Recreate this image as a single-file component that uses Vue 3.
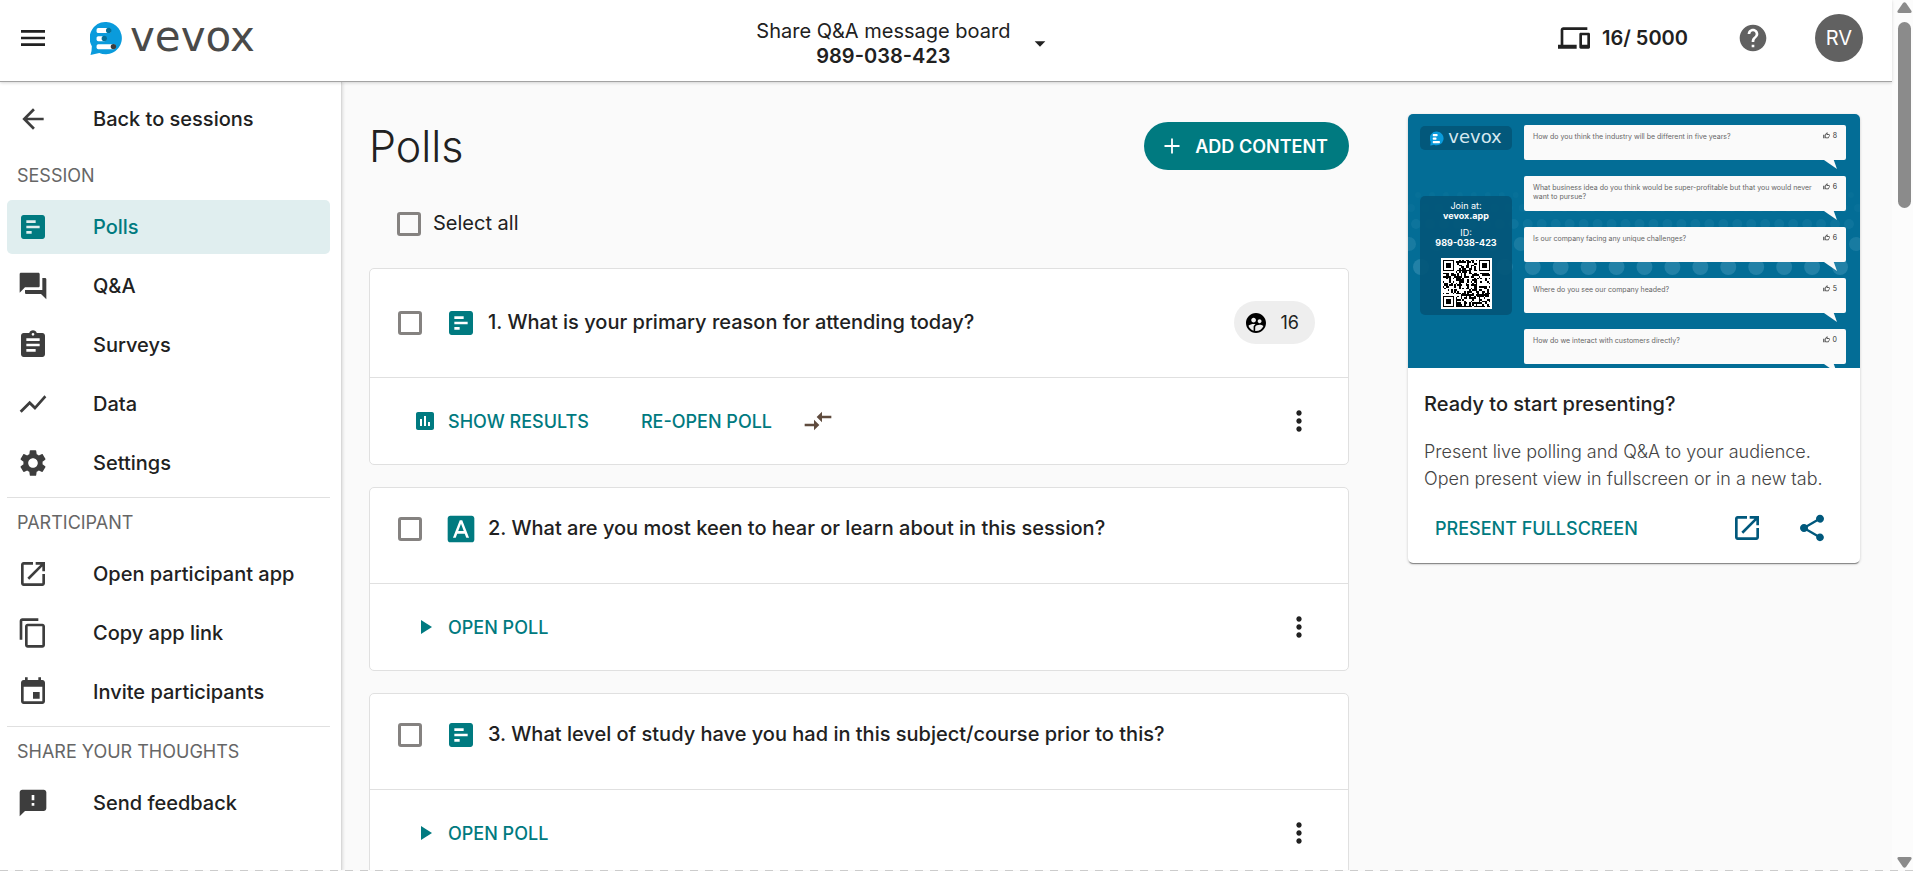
<template>
  <div class="shell">
    <div class="app">
      <header class="topbar">
        <div class="topbar-left">
          <button class="icon-btn" aria-label="Menu">
            <svg class="icon" viewBox="0 0 24 24"><path :d="icons.menu" /></svg>
          </button>
          <a href="#" class="logo">
            <svg class="logo-mark" viewBox="0 0 97 98">
              <path fill="#0a9bdc" d="M48 0a48 48 0 1 1-21 92Q14 95 1 98Q5 86 5 72A48 48 0 0 1 48 0z" />
              <rect x="19" y="18" width="42" height="15" rx="5" fill="#fff" />
              <rect x="19" y="42" width="29" height="15" rx="5" fill="#fff" />
              <rect x="19" y="66" width="56" height="15" rx="5" fill="#fff" />
              <circle cx="55" cy="25" r="8" fill="#056f97" />
              <circle cx="42" cy="49" r="8" fill="#056f97" />
              <circle cx="69" cy="73" r="8" fill="#3c3c3b" />
            </svg>
            <span class="logo-word">vevox</span>
          </a>
        </div>

        <button class="session-switch">
          <span class="session-text">
            <span class="session-name">Share Q&amp;A message board</span>
            <strong class="session-id">989-038-423</strong>
          </span>
          <svg class="icon" viewBox="0 0 24 24"><path :d="icons.caret" /></svg>
        </button>

        <div class="topbar-right">
          <div class="devices">
            <svg class="icon" viewBox="0 0 24 24"><path :d="icons.devices" /></svg>
            <span>16/ 5000</span>
          </div>
          <button class="icon-btn help" aria-label="Help">
            <svg class="icon" viewBox="0 0 24 24"><path :d="icons.help" /></svg>
          </button>
          <button class="avatar">RV</button>
        </div>
      </header>

      <div class="body">
        <nav class="sidebar">
          <a href="#" class="nav-item">
            <svg class="icon" viewBox="0 0 24 24"><path :d="icons.back" /></svg>
            <span>Back to sessions</span>
          </a>
          <section v-for="group in navGroups" :key="group.title" class="nav-group">
            <h2 class="nav-title">{{ group.title }}</h2>
            <div class="nav-items">
              <a
                v-for="item in group.items"
                :key="item.label"
                href="#"
                class="nav-item"
                :class="{ active: item.active }"
              >
                <svg class="icon" viewBox="0 0 24 24"><path fill-rule="evenodd" :d="icons[item.icon]" /></svg>
                <span>{{ item.label }}</span>
              </a>
            </div>
          </section>
        </nav>

        <main class="content">
          <div class="polls">
            <div class="polls-head">
              <h1>Polls</h1>
              <button class="add-btn">
                <svg class="icon-sm" viewBox="0 0 24 24"><path :d="icons.plus" /></svg>
                <span>ADD CONTENT</span>
              </button>
            </div>

            <label class="select-all">
              <input v-model="allSelected" type="checkbox" class="checkbox">
              <span>Select all</span>
            </label>

            <div class="poll-list">
              <article v-for="poll in polls" :key="poll.id" class="poll-card">
                <div class="poll-top" :class="{ voted: poll.votes }">
                  <input :id="'poll-' + poll.id" v-model="poll.selected" type="checkbox" class="checkbox">
                  <svg class="icon poll-type" viewBox="0 0 24 24"><path fill-rule="evenodd" :d="icons[poll.icon]" /></svg>
                  <label :for="'poll-' + poll.id" class="poll-name">{{ poll.id }}. {{ poll.question }}</label>
                  <div v-if="poll.votes" class="chip">
                    <svg class="icon-sm" viewBox="0 0 24 24"><path :d="icons.people" /></svg>
                    <span>{{ poll.votes }}</span>
                  </div>
                </div>
                <div class="poll-actions">
                  <template v-if="poll.votes">
                    <button class="text-btn">
                      <svg class="icon-sm" viewBox="0 0 24 24"><path :d="icons.results" /></svg>
                      <span>SHOW RESULTS</span>
                    </button>
                    <button class="text-btn reopen">RE-OPEN POLL</button>
                    <button class="icon-btn compare" aria-label="Compare">
                      <svg class="icon" viewBox="0 0 24 24"><path :d="icons.compare" /></svg>
                    </button>
                  </template>
                  <button v-else class="text-btn">
                    <svg class="icon-sm" viewBox="0 0 24 24"><path :d="icons.play" /></svg>
                    <span>OPEN POLL</span>
                  </button>
                  <button class="icon-btn more" aria-label="More options">
                    <svg class="icon" viewBox="0 0 24 24"><path :d="icons.more" /></svg>
                  </button>
                </div>
              </article>
            </div>
          </div>

          <aside class="present-card">
            <div class="preview">
              <svg class="preview-dots" viewBox="0 0 453 254" preserveAspectRatio="none">
                <circle v-for="(d, i) in dots" :key="i" :cx="d.x" :cy="d.y" :r="d.r" :fill-opacity="d.o" fill="#9fd4ea" />
              </svg>
              <div class="preview-side">
                <div class="preview-logo">
                  <svg class="preview-mark" viewBox="0 0 97 98">
                    <path fill="#0a9bdc" d="M48 0a48 48 0 1 1-21 92Q14 95 1 98Q5 86 5 72A48 48 0 0 1 48 0z" />
                    <rect x="19" y="18" width="34" height="16" rx="5" fill="#fff" />
                    <rect x="19" y="42" width="26" height="15" rx="5" fill="#fff" />
                    <rect x="19" y="66" width="50" height="16" rx="5" fill="#fff" />
                  </svg>
                  <span>vevox</span>
                </div>
                <div class="join">
                  <span>Join at:</span>
                  <strong>vevox.app</strong>
                  <span class="join-id">ID:</span>
                  <strong>989-038-423</strong>
                  <svg class="qr" viewBox="-1 -1 31 31" shape-rendering="crispEdges">
                    <rect x="-1" y="-1" width="31" height="31" fill="#fff" />
                    <path :d="qrPath" fill="#000" />
                  </svg>
                </div>
              </div>
              <div class="bubbles">
                <div v-for="q in questions" :key="q.text" class="bubble">
                  <p>{{ q.text }}</p>
                  <span class="likes">
                    <svg viewBox="0 0 24 24"><path :d="icons.thumb" /></svg>
                    {{ q.likes }}
                  </span>
                </div>
              </div>
            </div>
            <div class="present-body">
              <h3>Ready to start presenting?</h3>
              <p>Present live polling and Q&amp;A to your audience. Open present view in fullscreen or in a new tab.</p>
            </div>
            <div class="present-actions">
              <button class="text-btn">PRESENT FULLSCREEN</button>
              <button class="icon-btn open" aria-label="Open in new tab">
                <svg class="icon" viewBox="0 0 24 24"><path :d="icons.open" /></svg>
              </button>
              <button class="icon-btn" aria-label="Share">
                <svg class="icon" viewBox="0 0 24 24"><path :d="icons.share" /></svg>
              </button>
            </div>
          </aside>
        </main>
      </div>
    </div>

    <div class="scrollbar" aria-hidden="true">
      <svg viewBox="0 0 15 11"><path d="M6 1Q7.500-.5 9 1L14.500 9Q15 11 13 11H2Q0 11 .5 9z" /></svg>
      <div class="thumb"></div>
      <svg viewBox="0 0 15 11"><path d="M6 10Q7.500 11.500 9 10L14.500 2Q15 0 13 0H2Q0 0 .5 2z" /></svg>
    </div>
    <div class="bottom-edge"></div>
  </div>
</template>

<script setup>
import { ref, watch } from 'vue'

const icons = {
  menu: 'M3 18h18v-2H3v2zm0-5h18v-2H3v2zm0-7v2h18V6H3z',
  caret: 'M8 10l4 4 4-4z',
  devices: 'M4 6h18V4H4c-1.100 0-2 .9-2 2v11H0v3h14v-3H4V6zm19 2h-6c-.55 0-1 .45-1 1v10c0 .55.45 1 1 1h6c.55 0 1-.45 1-1V9c0-.55-.45-1-1-1zm-1 9h-4v-7h4v7z',
  help: 'M12 2C6.480 2 2 6.480 2 12s4.480 10 10 10 10-4.480 10-10S17.520 2 12 2zm1 17h-2v-2h2v2zm2.070-7.750l-.9.920C13.450 12.900 13 13.500 13 15h-2v-.5c0-1.100.45-2.100 1.170-2.830l1.240-1.260c.37-.36.59-.86.59-1.410 0-1.100-.9-2-2-2s-2 .9-2 2H8c0-2.210 1.790-4 4-4s4 1.790 4 4c0 .88-.36 1.680-.93 2.250z',
  back: 'M20 11H7.830l5.590-5.590L12 4l-8 8 8 8 1.410-1.410L7.830 13H20v-2z',
  poll: 'M19 3H5c-1.100 0-2 .9-2 2v14c0 1.100.9 2 2 2h14c1.100 0 2-.9 2-2V5c0-1.100-.9-2-2-2zM7 7h7v2H7zM7 11h10v2H7zM7 15h4v2H7z',
  qa: 'M21 6h-2v9H6v2c0 .55.45 1 1 1h11l4 4V7c0-.55-.45-1-1-1zm-4 6V3c0-.55-.45-1-1-1H3c-.55 0-1 .45-1 1v14l4-4h10c.55 0 1-.45 1-1z',
  survey: 'M19 3h-4.180C14.400 1.840 13.300 1 12 1c-1.300 0-2.400.84-2.820 2H5c-1.100 0-2 .9-2 2v14c0 1.100.9 2 2 2h14c1.100 0 2-.9 2-2V5c0-1.100-.9-2-2-2zm-7 0c.55 0 1 .45 1 1s-.45 1-1 1-1-.45-1-1 .45-1 1-1zm2 14H7v-2h7v2zm3-4H7v-2h10v2zm0-4H7V7h10v2z',
  data: 'M3.500 18.490l6-6.010 4 4L22 6.920l-1.410-1.410-7.090 7.970-4-4L2 16.990z',
  settings: 'M19.140 12.940c.04-.3.06-.61.06-.94 0-.32-.02-.64-.07-.94l2.030-1.580c.18-.14.23-.41.12-.61l-1.920-3.320c-.12-.22-.37-.29-.59-.22l-2.390.96c-.5-.38-1.030-.7-1.620-.94l-.36-2.540c-.04-.24-.24-.41-.48-.41h-3.840c-.24 0-.43.17-.47.41l-.36 2.540c-.59.24-1.130.57-1.620.94l-2.390-.96c-.22-.08-.47 0-.59.22L2.740 8.870c-.12.21-.08.47.12.61l2.030 1.580c-.05.3-.09.63-.09.94s.02.64.07.94l-2.030 1.580c-.18.14-.23.41-.12.61l1.920 3.320c.12.22.37.29.59.22l2.390-.96c.5.38 1.030.7 1.620.94l.36 2.540c.05.24.24.41.48.41h3.840c.24 0 .44-.17.47-.41l.36-2.540c.59-.24 1.130-.56 1.620-.94l2.390.96c.22.08.47 0 .59-.22l1.920-3.320c.12-.22.07-.47-.12-.61l-2.010-1.580zM12 15.600c-1.980 0-3.600-1.620-3.600-3.600s1.620-3.600 3.600-3.600 3.600 1.620 3.600 3.600-1.620 3.600-3.600 3.600z',
  open: 'M19 19H5V5h7V3H5c-1.110 0-2 .9-2 2v14c0 1.100.89 2 2 2h14c1.100 0 2-.9 2-2v-7h-2v7zM14 3v2h3.590l-9.830 9.830 1.410 1.410L19 6.410V10h2V3h-7z',
  copy: 'M16 1H4c-1.100 0-2 .9-2 2v14h2V3h12V1zm3 4H8c-1.100 0-2 .9-2 2v14c0 1.100.9 2 2 2h11c1.100 0 2-.9 2-2V7c0-1.100-.9-2-2-2zm0 16H8V7h11v14z',
  invite: 'M17 12h-5v5h5v-5zM16 1v2H8V1H6v2H5c-1.110 0-1.990.9-1.990 2L3 19c0 1.100.89 2 2 2h14c1.100 0 2-.9 2-2V5c0-1.100-.9-2-2-2h-1V1h-2zm3 18H5V8h14v11z',
  feedback: 'M20 2H4c-1.100 0-1.990.9-1.990 2L2 22l4-4h14c1.100 0 2-.9 2-2V4c0-1.100-.9-2-2-2zm-7 12h-2v-2h2v2zm0-4h-2V6h2v4z',
  plus: 'M19.500 12.900h-6.600v6.600h-1.800v-6.600H4.500v-1.800h6.600V4.500h1.800v6.600h6.600z',
  text: 'M9.930 13.500h4.140L12 7.980zM20 2H4c-1.100 0-2 .9-2 2v16c0 1.100.9 2 2 2h16c1.100 0 2-.9 2-2V4c0-1.100-.9-2-2-2zm-4.050 16.500l-1.140-3H9.170l-1.120 3H5.960l5.110-13h1.860l5.110 13h-2.090z',
  people: 'M11.990 2c-5.520 0-10 4.480-10 10s4.480 10 10 10 10-4.480 10-10-4.480-10-10-10zm3.610 6.340c1.070 0 1.930.86 1.930 1.930s-.86 1.930-1.930 1.930-1.930-.86-1.930-1.930c-.01-1.070.86-1.930 1.930-1.930zm-6-1.580c1.300 0 2.360 1.060 2.360 2.360s-1.060 2.360-2.360 2.360-2.360-1.060-2.360-2.360c0-1.310 1.050-2.360 2.360-2.360zm0 9.130v3.750c-2.400-.75-4.300-2.600-5.140-4.960 1.050-1.120 3.670-1.690 5.140-1.690.53 0 1.200.08 1.900.22-1.640.87-1.900 2.020-1.900 2.680zM11.990 20c-.27 0-.53-.01-.79-.04v-4.070c0-1.420 2.940-2.130 4.400-2.130 1.070 0 2.920.39 3.840 1.150-1.170 2.970-4.060 5.090-7.450 5.090z',
  results: 'M19 3H5c-1.100 0-2 .9-2 2v14c0 1.100.9 2 2 2h14c1.100 0 2-.9 2-2V5c0-1.100-.9-2-2-2zM9 17H7v-7h2v7zm4 0h-2V7h2v10zm4 0h-2v-4h2v4z',
  compare: 'M9.010 14H2v2h7.010v3L13 15l-3.990-4v3zm5.980-1v-3H22V8h-7.010V5L11 9l3.990 4z',
  play: 'M8 5v14l11-7z',
  more: 'M12 8c1.100 0 2-.9 2-2s-.9-2-2-2-2 .9-2 2 .9 2 2 2zm0 2c-1.100 0-2 .9-2 2s.9 2 2 2 2-.9 2-2-.9-2-2-2zm0 6c-1.100 0-2 .9-2 2s.9 2 2 2 2-.9 2-2-.9-2-2-2z',
  share: 'M18 16.080c-.76 0-1.440.3-1.960.77L8.910 12.700c.05-.23.09-.46.09-.7s-.04-.47-.09-.7l7.050-4.110c.54.5 1.250.81 2.040.81 1.660 0 3-1.340 3-3s-1.340-3-3-3-3 1.340-3 3c0 .24.04.47.09.7L8.040 9.810C7.500 9.310 6.790 9 6 9c-1.660 0-3 1.340-3 3s1.340 3 3 3c.79 0 1.500-.31 2.040-.81l7.120 4.160c-.05.21-.08.43-.08.65 0 1.610 1.310 2.920 2.920 2.920s2.920-1.310 2.920-2.920-1.310-2.920-2.920-2.920z',
  thumb: 'M9 21h9c.83 0 1.540-.5 1.840-1.220l3.020-7.050c.09-.23.14-.47.14-.73v-2c0-1.100-.9-2-2-2h-6.310l.95-4.570.03-.32c0-.41-.17-.79-.44-1.060L14.170 1 7.580 7.590C7.220 7.950 7 8.450 7 9v10c0 1.100.9 2 2 2zM9 9l4.340-4.340L12 10h9v2l-3 7H9V9zM1 9h4v12H1z'
}

const navGroups = [
  {
    title: 'SESSION',
    items: [
      { label: 'Polls', icon: 'poll', active: true },
      { label: 'Q&A', icon: 'qa' },
      { label: 'Surveys', icon: 'survey' },
      { label: 'Data', icon: 'data' },
      { label: 'Settings', icon: 'settings' }
    ]
  },
  {
    title: 'PARTICIPANT',
    items: [
      { label: 'Open participant app', icon: 'open' },
      { label: 'Copy app link', icon: 'copy' },
      { label: 'Invite participants', icon: 'invite' }
    ]
  },
  {
    title: 'SHARE YOUR THOUGHTS',
    items: [{ label: 'Send feedback', icon: 'feedback' }]
  }
]

const polls = ref([
  { id: 1, question: 'What is your primary reason for attending today?', icon: 'poll', votes: 16, selected: false },
  { id: 2, question: 'What are you most keen to hear or learn about in this session?', icon: 'text', votes: 0, selected: false },
  { id: 3, question: 'What level of study have you had in this subject/course prior to this?', icon: 'poll', votes: 0, selected: false }
])

const allSelected = ref(false)
watch(allSelected, (value) => {
  polls.value.forEach((poll) => { poll.selected = value })
})

const questions = [
  { text: 'How do you think the industry will be different in five years?', likes: 8 },
  { text: 'What business idea do you think would be super-profitable but that you would never want to pursue?', likes: 6 },
  { text: 'Is our company facing any unique challenges?', likes: 6 },
  { text: 'Where do you see our company headed?', likes: 5 },
  { text: 'How do we interact with customers directly?', likes: 0 }
]

// rows of faint circles behind the preview
const rows = [
  { y: 81, r: 3, step: 14, from: 10, o: 0.03 },
  { y: 94, r: 4, step: 14, from: 3, o: 0.04 },
  { y: 110, r: 5, step: 14, from: 8, o: 0.07 },
  { y: 130, r: 7, step: 28, from: 1, o: 0.14 },
  { y: 153, r: 8, step: 28, from: 13, o: 0.2 }
]
const dots = rows.flatMap((row) => {
  const list = []
  for (let x = row.from; x < 453; x += row.step) list.push({ x, y: row.y, r: row.r, o: row.o })
  return list
})

// 29x29 code with three finder squares
const size = 29
const finder = (x, y) => {
  const ring = Math.max(Math.abs(x - 3), Math.abs(y - 3))
  return ring <= 1 || ring === 3
}
let seed = 20
let qrPath = ''
for (let y = 0; y < size; y++) {
  for (let x = 0; x < size; x++) {
    seed = (seed * 1103515245 + 12345) % 2147483648
    let on = seed / 2147483648 > 0.5
    if (x < 8 && y < 8) on = x < 7 && y < 7 && finder(x, y)
    if (x > 20 && y < 8) on = x > 21 && y < 7 && finder(x - 22, y)
    if (x < 8 && y > 20) on = x < 7 && y > 21 && finder(x, y - 22)
    if (on) qrPath += `M${x} ${y}h1v1h-1z`
  }
}
</script>

<style>
body {
  margin: 0;
  background: #fafafa;
}
</style>

<style scoped>
.shell {
  position: relative;
  display: flex;
  height: 100vh;
  overflow: hidden;
  background: #fafafa;
  color: #212121;
  font-family: Inter, "Liberation Sans", sans-serif;
  font-size: 20px;
  line-height: 25px;
}

.app {
  flex: 1;
  min-width: 0;
  display: flex;
  flex-direction: column;
}

button {
  padding: 0;
  border: none;
  background: transparent;
  color: inherit;
  font: inherit;
  cursor: pointer;
}

a {
  color: inherit;
  text-decoration: none;
}

h1, h2, h3, p {
  margin: 0;
}

.icon {
  display: block;
  flex: none;
  width: 32px;
  height: 32px;
  fill: currentColor;
}

.icon-sm {
  display: block;
  flex: none;
  width: 24px;
  height: 24px;
  fill: currentColor;
}

.icon-btn {
  flex: none;
}

/* Top bar */
.topbar {
  position: relative;
  z-index: 2;
  display: flex;
  align-items: center;
  justify-content: space-between;
  height: 76px;
  padding: 0 29px 5px 17px;
  border-bottom: 1px solid #a3a3a3;
  background: #fff;
  box-shadow: 0 1px 3px rgba(0, 0, 0, 0.16);
}

.topbar-left {
  display: flex;
  align-items: center;
  gap: 41px;
}

.logo {
  display: flex;
  align-items: center;
  gap: 7px;
}

.logo-mark {
  width: 33px;
  height: 33px;
}

.logo-word {
  height: 40px;
  color: #4a4a49;
  font-family: "DejaVu Sans", sans-serif;
  font-size: 42px;
  line-height: 38px;
}

.session-switch {
  display: flex;
  align-items: center;
  gap: 14px;
  padding-top: 11px;
}

.session-text {
  display: flex;
  flex-direction: column;
  align-items: center;
}

.session-id {
  font-weight: 600;
}

.topbar-right {
  display: flex;
  align-items: center;
  color: #212121;
}

.devices {
  display: flex;
  align-items: center;
  gap: 12px;
  font-weight: 600;
}

.help {
  margin: 0 46px 0 49px;
  color: #616161;
}

.avatar {
  width: 48px;
  height: 48px;
  border-radius: 50%;
  background: #616161;
  color: #fff;
}

/* Sidebar */
.body {
  flex: 1;
  display: flex;
  min-height: 0;
}

.sidebar {
  flex: none;
  width: 323px;
  padding: 10px 11px 0 7px;
  border-right: 1px solid #d8d8d8;
  background: #fff;
  box-shadow: 1px 0 3px rgba(0, 0, 0, 0.12);
}

.nav-group + .nav-group {
  margin-top: 7px;
  border-top: 1px solid #e0e0e0;
}

.nav-title {
  padding: 12px 10px;
  color: #666;
  font-size: 18px;
  font-weight: 400;
}

.nav-item + .nav-group .nav-title {
  padding-top: 17px;
}

.nav-items {
  display: flex;
  flex-direction: column;
  gap: 5px;
}

.nav-item {
  display: flex;
  align-items: center;
  gap: 44px;
  height: 54px;
  padding: 0 10px;
  border-radius: 5px;
  font-weight: 500;
}

.nav-item .icon {
  color: #3d3d3d;
}

.nav-item.active {
  background: #e0eeef;
}

.nav-item.active,
.nav-item.active .icon {
  color: #007a80;
}

/* Polls */
.content {
  flex: 1;
  min-width: 0;
  display: grid;
  grid-template-columns: minmax(0, 1fr) 452px;
  align-items: start;
  gap: 59px;
  padding: 32px 32px 0 27px;
}

.polls {
  padding-top: 8px;
}

.polls-head {
  display: flex;
  align-items: center;
  justify-content: space-between;
}

h1 {
  font-size: 43px;
  font-weight: 300;
  line-height: 48px;
}

.add-btn {
  display: flex;
  align-items: center;
  gap: 11px;
  height: 48px;
  padding: 0 21px 0 16px;
  border-radius: 24px;
  background: #007a80;
  color: #fff;
  font-size: 18px;
  font-weight: 600;
}

.select-all {
  display: flex;
  align-items: center;
  gap: 12px;
  margin: 41px 28px 32px;
}

.checkbox {
  flex: none;
  width: 24px;
  height: 24px;
  margin: 0;
  border: 3px solid #858280;
  border-radius: 3px;
  appearance: none;
}

.checkbox:checked {
  border-color: #007a80;
  background: #007a80;
}

.poll-list {
  display: flex;
  flex-direction: column;
  gap: 22px;
}

.poll-card {
  border: 1px solid #e0e0e0;
  border-radius: 5px;
  background: #fff;
}

.poll-top {
  display: flex;
  align-items: center;
  height: 81px;
  padding: 0 33px 14px 28px;
  border-bottom: 1px solid #e0e0e0;
}

.poll-top.voted {
  padding-top: 13px;
}

.poll-type {
  margin: 0 11px 0 23px;
  color: #007a80;
}

.poll-name {
  flex: 1;
  font-weight: 500;
}

.chip {
  display: flex;
  align-items: center;
  gap: 13px;
  height: 43px;
  padding: 0 16px 0 10px;
  border-radius: 22px;
  background: #eee;
  font-size: 18px;
}

.chip .icon-sm {
  color: #000;
}

.poll-actions {
  display: flex;
  align-items: center;
  height: 86px;
  padding: 0 33px 0 43px;
}

.text-btn {
  display: flex;
  align-items: center;
  gap: 11px;
  color: #007a80;
  font-size: 18px;
  font-weight: 500;
}

.reopen {
  margin: 0 30px 0 52px;
}

.compare {
  color: #5f4b3e;
}

.more {
  margin-left: auto;
}

/* Present card */
.present-card {
  border-radius: 5px;
  background: #fff;
  box-shadow: 0 2px 1px -1px rgba(0, 0, 0, 0.4), 0 1px 3px rgba(0, 0, 0, 0.2);
}

.preview {
  position: relative;
  display: flex;
  gap: 12px;
  height: 254px;
  padding: 0 14px 0 12px;
  box-sizing: border-box;
  overflow: hidden;
  border-radius: 5px 5px 0 0;
  background: #036d96;
  font-size: 7px;
  line-height: 9px;
}

.preview-dots {
  position: absolute;
  inset: 0;
  width: 100%;
  height: 100%;
}

.preview-side {
  position: relative;
  flex: none;
  width: 92px;
  padding-top: 12px;
}

.preview-logo {
  display: flex;
  align-items: center;
  justify-content: center;
  gap: 4px;
  height: 24px;
  border-radius: 5px;
  background: #03587b;
  color: #d5e8f0;
  font-family: "DejaVu Sans", sans-serif;
  font-size: 18px;
  line-height: 18px;
}

.preview-logo span {
  padding-bottom: 3px;
}

.preview-mark {
  width: 14px;
  height: 15px;
}

.join {
  display: flex;
  flex-direction: column;
  align-items: center;
  margin-top: 46px;
  padding: 5px 0 6px;
  border-radius: 5px;
  background: rgba(3, 86, 120, 0.92);
  color: #fff;
  font-size: 9px;
  line-height: 10px;
}

.join-id {
  margin-top: 7px;
}

.qr {
  width: 51px;
  height: 51px;
  margin-top: 10px;
}

.bubbles {
  position: relative;
  flex: 1;
  display: flex;
  flex-direction: column;
  gap: 16px;
  padding-top: 11px;
}

.bubble {
  position: relative;
  display: flex;
  flex: none;
  justify-content: space-between;
  height: 35px;
  padding: 7px 9px 0;
  box-sizing: border-box;
  border-radius: 2px;
  background: #fafafa;
  color: #666;
}

.bubble p {
  width: 284px;
}

.bubble::after {
  content: "";
  position: absolute;
  top: 100%;
  right: 9px;
  width: 13px;
  height: 9px;
  background: #fafafa;
  clip-path: polygon(0 0, 75% 0, 100% 100%);
}

.likes {
  display: flex;
  gap: 3px;
  line-height: 7px;
  color: #333;
}

.likes svg {
  width: 7px;
  height: 7px;
  fill: currentColor;
}

.present-body {
  padding: 24px 16px 0;
}

.present-body h3 {
  font-size: 20px;
  font-weight: 500;
}

.present-body p {
  margin-top: 21px;
  color: #444;
  font-size: 18px;
  font-weight: 300;
  line-height: 27px;
}

.present-actions {
  display: flex;
  align-items: center;
  gap: 33px;
  padding: 20px 32px 19px 27px;
  color: #00587c;
}

.present-actions .open {
  margin-left: auto;
}

/* Scrollbar */
.scrollbar {
  flex: none;
  display: flex;
  flex-direction: column;
  align-items: center;
  width: 16px;
  padding: 2px 1px 3px 4px;
  background: #fcfcfc;
}

.scrollbar svg {
  width: 15px;
  height: 11px;
  fill: #8b8b8b;
}

.thumb {
  width: 13px;
  height: 186px;
  margin: 9px 0 auto;
  border-radius: 7px;
  background: #8b8b8b;
}

.bottom-edge {
  position: absolute;
  left: 0;
  right: 0;
  bottom: 0;
  z-index: 3;
  height: 1px;
  background: repeating-linear-gradient(90deg, #ccc 0 8px, #fafafa 8px 15px);
}
</style>
